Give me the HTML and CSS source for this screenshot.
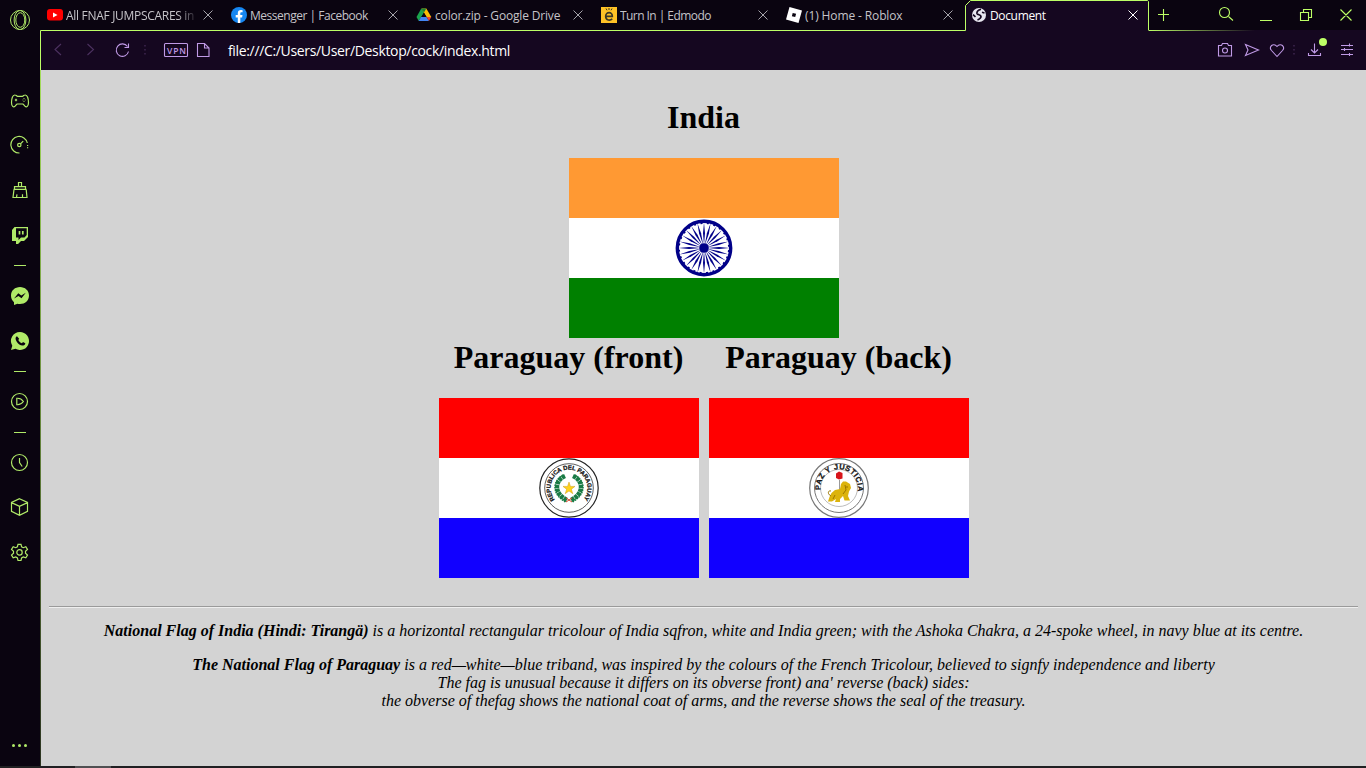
FILE: index.html
```html
<!DOCTYPE html>
<html lang="en">
<head>
<meta charset="utf-8">
<title>Document</title>
<link rel="stylesheet" href="styles.css">
</head>
<body>
<div class="browser">
  <nav class="sidebar">
    <div class="side-item logo"><svg width="22" height="22" viewBox="0 0 22 22"><circle cx="11" cy="11" r="9.500"/><ellipse cx="11.300" cy="11" rx="4.500" ry="7.300"/><path d="M10 1.500C3.500 4 3.500 18 10 20.500M12 1.500c6.500 2.500 6.500 16.500 0 19"/></svg></div>
    <div class="side-item h44 first"><svg viewBox="0 0 20 20"><path d="M5 4C2.500 3.800 1.600 7.500 1.500 11.500c0 4 2 5.100 3.500 3.700l2-2.200h6l2 2.200c1.500 1.400 3.500.3 3.500-3.700-.1-4-1-7.700-3.500-7.500-1.400 0-1.700 1.300-2.500 1.300h-5C6.700 5.300 6.400 4 5 4z"/><path d="M4.800 9h2.400M6 7.800v2.400M14 7.300v.8M14 9.900v.8M12.600 9h.7M14.800 9h.7"/></svg></div>
    <div class="side-item h44"><svg viewBox="0 0 20 20"><path d="M9.500 18A8.300 8.300 0 1 1 17.300 8"/><circle cx="9.300" cy="10" r="1.700"/><path d="M10.700 8.600l2.500-2.500"/><path d="M17.600 10v4" stroke-dasharray="1 1.200"/></svg></div>
    <div class="side-item h46"><svg viewBox="0 0 20 20"><path d="M8.500 6.500v-4h3v4M4.500 9.300V6.700h11v2.600M3.500 9.300h13M4 9.500l-1 8h14l-.8-8M6.500 17.300l.5-3M12.500 17.300v-3"/></svg></div>
    <div class="side-item h44"><svg viewBox="0 0 20 20"><path class="fill" fill-rule="evenodd" d="M4.500 2H18v10l-4 4h-3l-3 3H6v-3H2V5zM6 3.300v9.200h2.500V15l2.500-2.500h3.500L16.700 10V3.300z"/><path d="M9.500 6v3.500M12.800 6v3.500" class="thick"/></svg></div>
    <div class="side-item h16"><i class="dash"></i></div>
    <div class="side-item h46"><svg viewBox="0 0 20 20"><path class="fill" d="M10 1c5 0 9 3.500 9 8.500S15 18 10 18c-1 0-1.800-.1-2.600-.3L4 19v-2.800C2 14.600 1 12.200 1 9.500 1 4.500 5 1 10 1z"/><path class="cut" d="M4 12.600l4.300-5.400 3 2.200 4.500-2.600-4.300 5.400-3-2.200z"/></svg></div>
    <div class="side-item h44"><svg viewBox="0 0 20 20"><path class="fill" d="M10 1a9 9 0 1 1-4.500 16.800L1 19l1.300-4.300A9 9 0 0 1 10 1z"/><path class="cut" d="M7 5.200c-1.800.8-1.900 2.900-.4 5.200 1.700 2.700 4.300 4.500 6.600 4 1.200-.2 2.200-1.100 2.100-2.200l-2.300-1.200-1.100 1.300c-1.600-.6-2.900-1.800-3.600-3.300l.9-1.200z"/></svg></div>
    <div class="side-item h16"><i class="dash"></i></div>
    <div class="side-item h44"><svg viewBox="0 0 20 20"><circle cx="9.500" cy="10.500" r="8"/><path d="M6.800 7.300v6.400c2.500.2 5.200-1.200 6.600-3.200-1.400-2-4.100-3.400-6.600-3.200z"/></svg></div>
    <div class="side-item h18"><i class="dash"></i></div>
    <div class="side-item h42"><svg viewBox="0 0 20 20"><circle cx="9.500" cy="10.500" r="8"/><path d="M9.500 6v4.500l2.700 4"/></svg></div>
    <div class="side-item h48"><svg viewBox="0 0 20 20"><path d="M9.500 1.700l8 3.800v8.800l-8 4-8-4V5.500zM1.500 5.600l8 3.800 8-3.800M9.500 9.400v8.800"/></svg></div>
    <div class="side-item h42"><svg viewBox="0 0 20 20"><path d="M8 2.300h3l.6 2.500 1.700.9 2.500-.9 1.700 2.700-2 1.800v2l2 1.800-1.700 2.700-2.500-.8-1.700 1L11 18.500H8L7.400 16l-1.700-1-2.500.8-1.700-2.700 2-1.800v-2l-2-1.800 1.700-2.700 2.500.9 1.700-.9z"/><circle cx="9.500" cy="10.400" r="2.700"/></svg></div>
    <div class="more"><i></i><i></i><i></i></div>
  </nav>

  <div class="main">
    <header class="tabbar">
      <div class="tab first-tab"><svg class="fav" viewBox="0 0 16 16"><rect y="2" width="16" height="11.500" rx="3" fill="#f00"/><path d="M6 5.500v5l4.500-2.500z" fill="#fff"/></svg><span class="title fade t1">All FNAF JUMPSCARES in</span><svg class="x" viewBox="0 0 10 10"><path d="M.5.500l9 9M9.500.500l-9 9"/></svg></div>
      <div class="tab"><svg class="fav" viewBox="0 0 16 16"><circle cx="8" cy="8" r="8" fill="#1687f2"/><path d="M6.800 16v-5.500H4.700V8h2.100V6.300c0-2.200 1.200-3.300 3.200-3.300l1.600.2v2h-1c-1 0-1.300.5-1.300 1.200V8h2.200l-.4 2.500H9.300V16z" fill="#fff"/></svg><span class="title t2">Messenger | Facebook</span><svg class="x" viewBox="0 0 10 10"><path d="M.5.500l9 9M9.500.500l-9 9"/></svg></div>
      <div class="tab"><svg class="fav" viewBox="0 0 16 16"><path d="M5.300 1.500L.5 10l2.200 4L8 5.500z" fill="#1ba34d"/><path d="M10.300 1.500l5 8.500h-4.800L5.500 1.500z" fill="#fbbc05"/><path d="M5.300 1.500L8 5.600l2.300-4.100z" fill="#188038"/><path d="M8 5.700L5.500 10h5z" fill="#0b0412"/><path d="M5 10h5.500l2.500 4H2.700z" fill="#4285f4"/><path d="M10.500 10h4.800L13 14z" fill="#ea4335"/></svg><span class="title t3">color.zip - Google Drive</span><svg class="x" viewBox="0 0 10 10"><path d="M.5.500l9 9M9.500.500l-9 9"/></svg></div>
      <div class="tab"><svg class="fav" viewBox="0 0 16 16"><path fill="#ffc226" d="M0 0h16v16H0z"/><path d="M4.700 9.300h6.600C11.500 4.300 4.700 4.300 4.700 9.300c0 4.500 4.800 4.500 6.500 2.400" fill="none" stroke="#3d3826" stroke-width="1.700"/><path d="M5 1.500l1 1.800M8 1v2M11 1.500l-1 1.800" stroke="#3d3826"/></svg><span class="title t4">Turn In | Edmodo</span><svg class="x" viewBox="0 0 10 10"><path d="M.5.500l9 9M9.500.500l-9 9"/></svg></div>
      <div class="tab"><svg class="fav" viewBox="0 0 16 16"><path fill="#fff" fill-rule="evenodd" d="M3.500 0L16 3.500 12.500 16 0 12.500zM6.700 5.900l-.8 3.300 3.300.9.900-3.300z"/></svg><span class="title t5">(1) Home - Roblox</span><svg class="x" viewBox="0 0 10 10"><path d="M.5.500l9 9M9.500.500l-9 9"/></svg></div>
      <div class="tab active"><svg class="fav" viewBox="0 0 16 16"><circle cx="8" cy="8" r="7" fill="#e8e6f0"/><path d="M10 2.200C7 3 5.500 4.800 6 6.600c.8 1.600 4 .8 4 3 0 1.700-1.700 2.700-3.500 3.400M2 7.600l2.500 2.200M11 5.300l2.500.7" fill="none" stroke="#150720" stroke-width="1.700"/></svg><span class="title t6">Document</span><svg class="x" viewBox="0 0 10 10"><path d="M.5.500l9 9M9.500.500l-9 9"/></svg></div>
      <svg class="controls" width="216" height="30" viewBox="1150 0 216 30"><path d="M1163.500 9v12M1158 14.500h11M1260 20.500h12M1300.500 12.500h8v8h-8zM1303.500 12.500v-3h8v8h-3M1340.500 9.500l11 11M1351.500 9.500l-11 11M1228.500 16.500l4.500 4"/><circle cx="1224.500" cy="12.500" r="5"/></svg>
    </header>

    <div class="toolbar">
      <svg class="nav-icons" width="174" height="40" viewBox="40 30 174 40"><path class="dim" d="M61 44l-6 5.500 6 5.500M87.500 44l6 5.500-6 5.500"/><path d="M127.500 46.500a6.200 6.200 0 1 0 1 5M128.500 43.500v4h-4"/><path class="dim" d="M145 45v10" stroke-dasharray="1.500 2.500"/><rect x="164.500" y="43.500" width="23" height="13" rx="1"/><text x="167" y="53.500" textLength="19">VPN</text><path d="M197.500 43.500h7l4.500 4.500v8.500h-11.500zM204.500 43.500V48h4.500"/></svg>
      <span class="url">file:///C:/Users/User/Desktop/cock/index.html</span>
      <svg class="tools" width="156" height="40" viewBox="1210 30 156 40"><path d="M1218.500 45.500h3l1-2h5l1 2h3v10.500h-13z"/><circle cx="1225" cy="50.500" r="2.500"/><path d="M1245.500 44.500l13 5.500-13 5.500 2.500-5.500z"/><path d="M1277 56.500l-5.500-6c-3-3.500 1.500-8.500 5.500-4 4-4.500 8.500.5 5.500 4z"/><path class="dim" d="M1294 45v10" stroke-dasharray="1.500 2.500"/><path d="M1314.500 43.500v9M1311 49.500l3.500 3.500 3.500-3.500M1308.500 53v2.500h12V53M1341 45.500h12M1341 49.500h12M1341 54.500h12M1349.500 43.500v3M1344.500 48v3M1349.500 53v3"/><circle class="badge" cx="1323" cy="42" r="4"/></svg>
    </div>

    <main class="page">
      <h1>India</h1>
      <div class="flag india">
        <div class="stripe saffron"></div>
        <div class="stripe white">
          <svg width="60" height="60" viewBox="-30 -30 60 60">
            <defs>
              <path id="s1" d="M0-3L1-15 0-25.500-1-15z"/>
              <g id="s2"><use href="#s1"/><use href="#s1" transform="rotate(15)"/></g>
              <g id="s4"><use href="#s2"/><use href="#s2" transform="rotate(30)"/></g>
              <g id="s8"><use href="#s4"/><use href="#s4" transform="rotate(60)"/></g>
            </defs>
            <g fill="#000088"><use href="#s8"/><use href="#s8" transform="rotate(120)"/><use href="#s8" transform="rotate(240)"/><circle r="4.800"/></g>
            <circle r="26.700" fill="none" stroke="#000088" stroke-width="3.400"/>
            <circle r="24.900" fill="none" stroke="#000088" stroke-width="1.600" stroke-dasharray="2 4.519" transform="rotate(5)"/>
          </svg>
        </div>
        <div class="stripe green"></div>
      </div>

      <div class="pair">
        <section>
          <h1>Paraguay (front)</h1>
          <div class="flag">
            <div class="stripe red"></div>
            <div class="stripe white">
              <svg width="60" height="60" viewBox="-30 -30 60 60">
                <circle r="29.200" fill="#fff" stroke="#222" stroke-width="1.200"/><circle r="24.300" fill="none" stroke="#333" stroke-width=".8"/>
                <path id="arc1" d="M-14.200 11.700A18.400 18.400 0 1 1 10 15.450" fill="none"/>
                <text class="seal"><textPath href="#arc1" textLength="82">REPUBLICA DEL PARAGUAY</textPath></text>
                <g fill="none" stroke="#197b45"><path d="M-4-12C-15-7-15 6-2 12M4-12C15-7 15 6 2 12" stroke-width="4.500" stroke-dasharray="3.500 .5"/><path d="M-6-13C-18-6-16 8-3 14M6-13C18-6 16 8 3 14" stroke-width="1.500" stroke-dasharray="1.500 1"/></g>
                <path d="M-3 14l6-4M3 14l-6-4" stroke="#d8462f"/>
                <path d="M0-6l1.500 4.400H6L2.400 1.200 3.800 5.700 0 3-3.800 5.700-2.400 1.200-6-1.600h4.500z" fill="#ffd21c" stroke="#c08a00" stroke-width=".4"/>
              </svg>
            </div>
            <div class="stripe blue"></div>
          </div>
        </section>
        <section>
          <h1>Paraguay (back)</h1>
          <div class="flag">
            <div class="stripe red"></div>
            <div class="stripe white">
              <svg width="60" height="60" viewBox="-30 -30 60 60">
                <g fill="#fff" stroke="#777"><circle r="29.300" stroke-width="1.200"/><circle r="24.500"/><circle r="18.500" stroke="#aaa" stroke-width=".8"/></g>
                <path id="arc2" d="M-18.500 2A18.700 18.700 0 1 1 16 9.700" fill="none"/>
                <text class="seal big"><textPath href="#arc2" textLength="64">PAZ Y JUSTICIA</textPath></text>
                <path d="M.5-8V12" stroke="#999"/><path d="M-3-14.500L0-16.500l3.500 1.500v5.500L0-8.500l-3-1.500z" fill="#d7141a"/>
                <path d="M7-6.500l4 2.500 1 4-2 3.500L9 8l2 4.500H5.500L4 8 1 11v3h-5l1-3-4 2.500h-4L-9.500 9l2-4L-4 2l5-1 1-5 2-2.500z" fill="#dcb30c"/>
                <path d="M-8 8c-4-2-3-6 0-5M6-3l1 5-3 4M-4 7l-2 4M9-1H7" fill="none" stroke="#9c7600"/>
              </svg>
            </div>
            <div class="stripe blue"></div>
          </div>
        </section>
      </div>

      <hr>
      <p class="about-india"><b>National Flag of India (Hindi: Tirangä)</b> is a horizontal rectangular tricolour of India sqfron, white and India green; with the Ashoka Chakra, a 24-spoke wheel, in navy blue at its centre.</p>
      <p><b>The National Flag of Paraguay</b> is a red—white—blue triband, was inspired by the colours of the French Tricolour, believed to signfy independence and liberty<br>The fag is unusual because it differs on its obverse front) ana' reverse (back) sides:<br>the obverse of thefag shows the national coat of arms, and the reverse shows the seal of the treasury.</p>
    </main>
  </div>
</div>
<div class="taskbar"><i></i></div>
<svg class="outline" width="1366" height="70" viewBox="0 0 1366 70">
  <defs><linearGradient id="fadeout"><stop offset="0" stop-color="#bdff66"/><stop offset="1" stop-color="#bdff66" stop-opacity="0"/></linearGradient></defs>
  <path d="M40.500 70V30.500H965.500V5.500L970.500.500H1147.500L1148.500 1.500V30.500" fill="none" stroke="#bdff66"/>
  <path d="M1149 30h106v1h-106z" fill="url(#fadeout)"/>
</svg>
</body>
</html>
```
FILE: styles.css
```css
* { box-sizing: border-box; }
body {
  margin: 0;
  width: 1366px;
  height: 768px;
  overflow: hidden;
  background: #0a0410;
  font-family: "Open Sans", "Noto Sans", sans-serif;
}
.browser { display: flex; height: 766px; }
svg { display: block; flex: none; }

.sidebar { width: 40px; display: flex; flex-direction: column; flex: none; }
.side-item { display: flex; align-items: center; justify-content: center; flex: none; }
.side-item svg { width: 20px; height: 20px; fill: none; stroke: #b0ea68; stroke-width: 1.2; }
.side-item .fill { fill: #b0ea68; stroke: none; }
.side-item .cut { fill: #0a0410; stroke: none; }
.side-item .thick { stroke-width: 1.7; }
.side-item.logo { height: 40px; }
.side-item.logo svg { width: 22px; height: 22px; stroke-width: 1; }
.first { margin-top: 39px; }
.h16 { height: 16px; }
.h18 { height: 18px; }
.h42 { height: 42px; }
.h44 { height: 44px; }
.h46 { height: 46px; }
.h48 { height: 48px; }
.dash { width: 12px; height: 1px; background: #b0ea68; }
.more { display: flex; gap: 3px; margin: auto 0 19px 12px; }
.more i { width: 3px; height: 3px; border-radius: 50%; background: #b0ea68; }

.main {
  flex: 1;
  min-width: 0;
  display: flex;
  flex-direction: column;
}
.tabbar { height: 30px; display: flex; flex: none; background: #0a0410; }
.tab {
  width: 185px;
  height: 30px;
  padding: 0 12px 0 6px;
  display: flex;
  align-items: center;
  flex: none;
  color: #c5c3c8;
  font-size: 12px;
}
.first-tab { padding-left: 7px; }
.fav { width: 16px; height: 16px; }
.title {
  flex: 1;
  min-width: 0;
  margin: 2px 4px 0 3px;
  overflow: hidden;
  white-space: nowrap;
  line-height: 20px;
}
.fade { -webkit-mask-image: linear-gradient(90deg, #000 112px, transparent 132px); mask-image: linear-gradient(90deg, #000 112px, transparent 132px); }
.t1 { letter-spacing: -0.3px; }
.t2 { letter-spacing: -0.48px; }
.t3 { letter-spacing: -0.17px; }
.t4 { letter-spacing: -0.56px; }
.t5 { letter-spacing: -0.12px; }
.t6 { letter-spacing: -0.35px; }
.x { width: 10px; height: 10px; stroke: #a5a3aa; fill: none; }
.active { width: 184px; background: #150720; color: #fff; padding-right: 11px; clip-path: polygon(5px 0, 100% 0, 100% 100%, 0 100%, 0 5px); }
.active .x { stroke: #fff; }
.controls { margin-left: 1px; fill: none; stroke: #bdff66; stroke-width: 1.1; }

.toolbar {
  height: 40px;
  flex: none;
  display: flex;
  align-items: center;
  background: #150720;
}
.nav-icons, .tools { fill: none; stroke: #c09ae6; stroke-width: 1.1; }
.dim { stroke: #4c3160; }
.nav-icons text { fill: #c09ae6; stroke: none; font: 600 8.5px "Open Sans", sans-serif; }
.badge { fill: #bdff66; stroke: none; }
.url { margin-left: 14px; flex: 1; color: #fff; font-size: 14px; letter-spacing: -0.34px; white-space: nowrap; }

.page {
  flex: 1;
  padding: 29px 8px 0 9px;
  background: linear-gradient(#a4dd5a, #2b3320) left / 1px 100% no-repeat #d3d3d3;
  color: #000;
  font-family: "Liberation Serif", serif;
  font-size: 16px;
}
h1 {
  margin: 0 0 23px;
  font-size: 32px;
  line-height: 36px;
  text-align: center;
  white-space: nowrap;
}
.flag { width: 260px; }
.india { width: 270px; margin: 0 auto; }
.stripe { height: 60px; display: flex; justify-content: center; }
.saffron { background: #ff9933; }
.white { background: #fff; }
.green { background: #008000; }
.red { background: #ff0000; }
.blue { background: #1100ff; }
.pair { display: flex; justify-content: center; gap: 10px; margin-top: 1px; }
.pair section { width: 260px; }
.seal { font: bold 6px "Liberation Sans", sans-serif; fill: #111; stroke: #111; stroke-width: 0.25px; }
.seal.big { font-size: 7.5px; }
hr { margin: 28px 0 0; height: 2px; border: 0; border-top: 1px solid #9a9a9a; border-bottom: 1px solid #eee; }
p { margin: 16px 0 0; line-height: 18px; text-align: center; font-style: italic; white-space: nowrap; }
.about-india { margin-top: 14px; }

.taskbar { height: 2px; background: #202022; padding-left: 75px; }
.taskbar i { display: block; width: 36px; height: 2px; background: #505052; }
.outline { position: absolute; left: 0; top: 0; pointer-events: none; }
```
